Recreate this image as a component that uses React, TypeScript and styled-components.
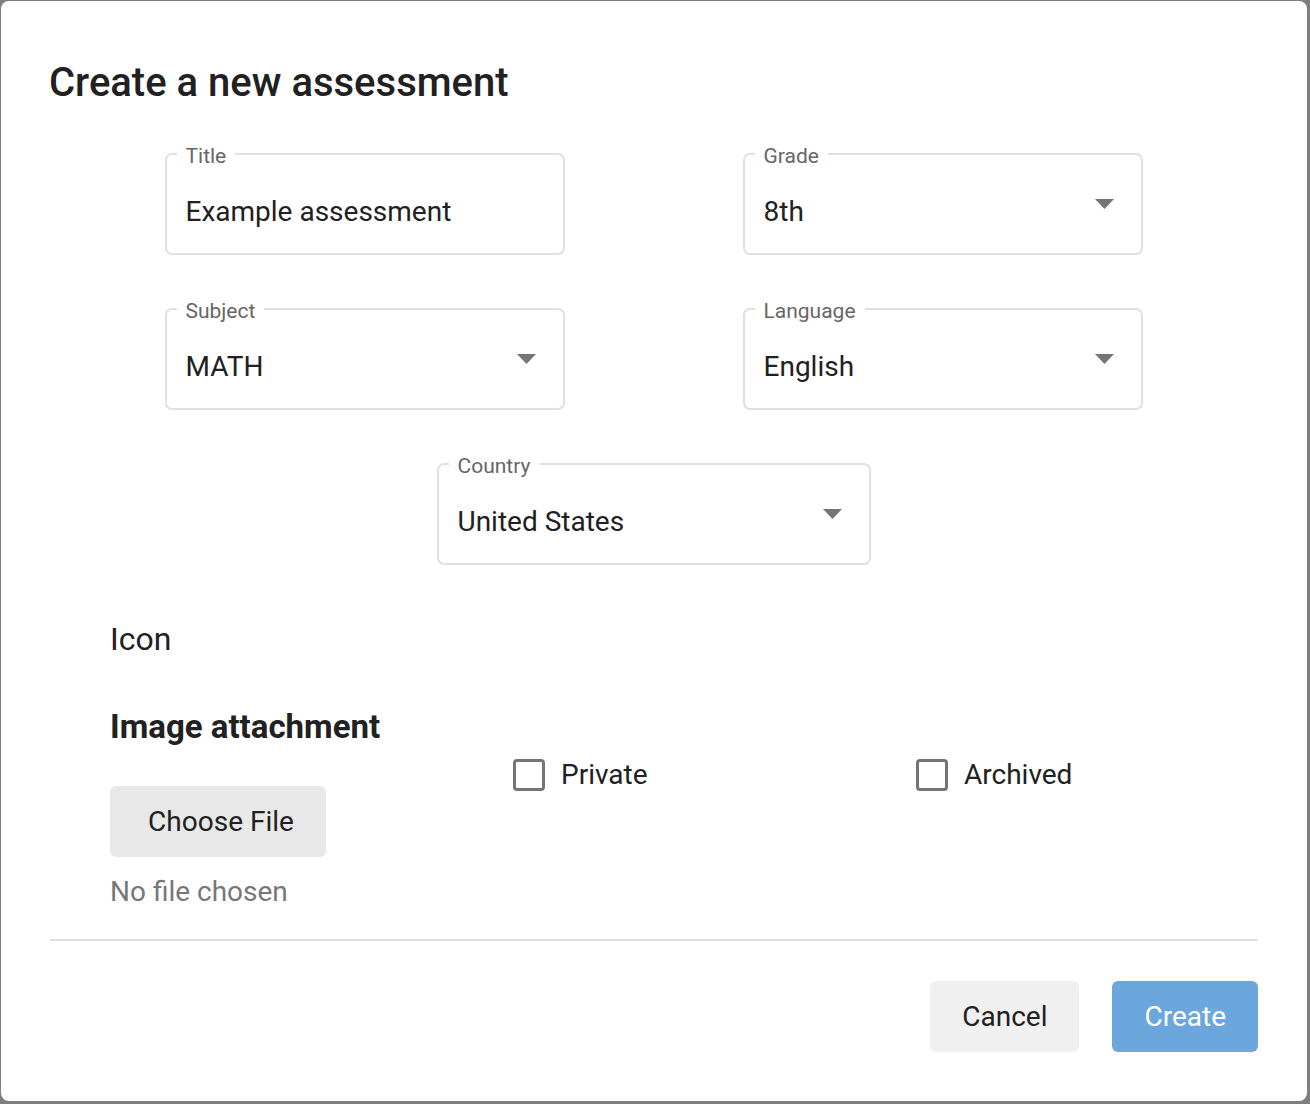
import React from 'react';
import styled, { createGlobalStyle } from 'styled-components';

const GlobalStyle = createGlobalStyle`
  html, body {
    margin: 0;
    padding: 0;
    background: #7f7f7f;
    font-family: Roboto, 'Liberation Sans', Arial, sans-serif;
    color: #212121;
  }
  * {
    box-sizing: border-box;
  }
`;

type FieldProps = {
  label: string;
  value: string;
  select?: boolean;
  width?: number;
};

const Field = ({ label, value, select, width = 400 }: FieldProps) => (
  <FieldBox $width={width}>
    <FieldLabel>{label}</FieldLabel>
    <FieldValue>{value}</FieldValue>
    {select && (
      <Arrow width='19' height='10' viewBox='0 0 19 10'>
        <polygon points='0,0 19,0 9.5,10' fill='#757575' />
      </Arrow>
    )}
  </FieldBox>
);

const Checkbox = ({ label }: { label: string }) => (
  <CheckRow>
    <CheckSquare />
    <CheckText>{label}</CheckText>
  </CheckRow>
);

export default function App() {
  return (
    <>
      <GlobalStyle />
      <Backdrop>
        <Dialog>
          <Heading>Create a new assessment</Heading>
          <FieldGrid>
            <Field label='Title' value='Example assessment' />
            <Field label='Grade' value='8th' select />
            <Field label='Subject' value='MATH' select />
            <Field label='Language' value='English' select />
          </FieldGrid>
          <CountryRow>
            <Field label='Country' value='United States' select width={434} />
          </CountryRow>
          <Extras>
            <PlainText>Icon</PlainText>
            <AttachGrid>
              <AttachColumn>
                <SubHeading>Image attachment</SubHeading>
                <FileButton>Choose File</FileButton>
                <FileHint>No file chosen</FileHint>
              </AttachColumn>
              <Checkbox label='Private' />
              <Checkbox label='Archived' />
            </AttachGrid>
          </Extras>
          <Divider />
          <Footer>
            <ActionButton>Cancel</ActionButton>
            <ActionButton $primary>Create</ActionButton>
          </Footer>
        </Dialog>
      </Backdrop>
    </>
  );
}

const Backdrop = styled.div`
  width: 1310px;
  min-height: 1104px;
  padding: 1px 3px 3px 1px;
`;

const Dialog = styled.div`
  width: 1306px;
  height: 1100px;
  background: #ffffff;
  border-radius: 8px;
  padding: 60px 49px 49px 48px;
  display: flex;
  flex-direction: column;
`;

const Heading = styled.h2`
  margin: 0;
  font-size: 40px;
  line-height: 44px;
  font-weight: 500;
  color: #212121;
`;

const FieldGrid = styled.div`
  display: grid;
  grid-template-columns: 400px 400px;
  column-gap: 178px;
  row-gap: 53px;
  justify-content: center;
  margin-top: 48px;
`;

const CountryRow = styled.div`
  display: flex;
  justify-content: center;
  margin-top: 53px;
`;

const FieldBox = styled.div<{ $width: number }>`
  position: relative;
  width: ${({ $width }) => $width}px;
  height: 102px;
  border: 2px solid #e0e0e0;
  border-radius: 7px;
  padding: 0 27px 0 19px;
  display: flex;
  align-items: center;
  justify-content: space-between;
`;

const FieldLabel = styled.span`
  position: absolute;
  top: -11px;
  left: 10px;
  padding: 0 9px;
  background: #ffffff;
  font-size: 21px;
  line-height: 24px;
  color: #666666;
`;

const FieldValue = styled.span`
  padding-top: 16px;
  font-size: 28px;
  line-height: 32px;
  color: #212121;
`;

const Arrow = styled.svg`
  display: block;
  flex-shrink: 0;
`;

const Extras = styled.div`
  margin: 56px 0 0 61px;
  display: flex;
  flex-direction: column;
`;

const PlainText = styled.div`
  font-size: 32px;
  line-height: 36px;
  color: #212121;
`;

const AttachGrid = styled.div`
  display: grid;
  grid-template-columns: 403px 403px auto;
  align-items: start;
  margin-top: 52px;
`;

const AttachColumn = styled.div`
  display: flex;
  flex-direction: column;
  align-items: flex-start;
`;

const SubHeading = styled.div`
  font-size: 33px;
  line-height: 36px;
  font-weight: 700;
  color: #212121;
`;

const FileButton = styled.button`
  margin-top: 41px;
  width: 216px;
  height: 71px;
  padding: 0 0 0 6px;
  border: none;
  border-radius: 6px;
  background: #e8e8e8;
  font-family: inherit;
  font-size: 28px;
  color: #212121;
`;

const FileHint = styled.div`
  margin-top: 19px;
  font-size: 28px;
  line-height: 32px;
  color: #777777;
`;

const CheckRow = styled.label`
  margin-top: 50px;
  display: flex;
  align-items: center;
  gap: 16px;
`;

const CheckSquare = styled.span`
  width: 32px;
  height: 32px;
  border: 3px solid #757575;
  border-radius: 4px;
`;

const CheckText = styled.span`
  font-size: 28px;
  line-height: 32px;
  color: #212121;
`;

const Divider = styled.hr`
  margin: 31px 0 0 1px;
  border: none;
  height: 2px;
  background: #e0e0e0;
`;

const Footer = styled.div`
  margin-top: 40px;
  display: flex;
  justify-content: flex-end;
  gap: 33px;
`;

const ActionButton = styled.button<{ $primary?: boolean }>`
  height: 71px;
  padding: 0 32px;
  border: none;
  border-radius: 6px;
  background: ${({ $primary }) => ($primary ? '#6ba7dd' : '#f0f0f0')};
  color: ${({ $primary }) => ($primary ? '#ffffff' : '#212121')};
  font-family: inherit;
  font-size: 28px;
  font-weight: 400;
`;
